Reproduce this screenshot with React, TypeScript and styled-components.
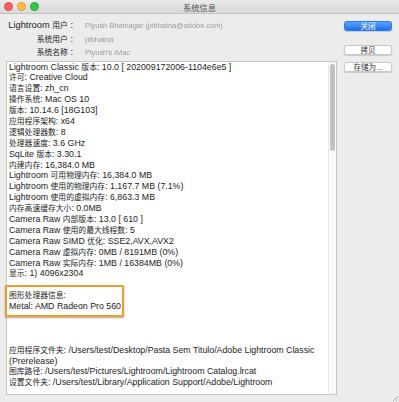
import styled, { createGlobalStyle } from "styled-components";

const GlobalStyle = createGlobalStyle`
	html, body {
		margin: 0;
		padding: 0;
		background: #ececec;
	}
	* {
		box-sizing: border-box;
	}
`;

const FONT = `"Liberation Sans", "Noto Sans CJK SC", sans-serif`;

const Window = styled.div`
	width: 399px;
	height: 402px;
	background: #ececec;
	font-family: ${FONT};
	display: flex;
	flex-direction: column;
	overflow: hidden;
	position: relative;
`;

const TitleBar = styled.div`
	height: 14px;
	flex: none;
	position: relative;
	display: flex;
	align-items: center;
	justify-content: center;
	background: linear-gradient(#ebebeb, #d9d9d9);
	border-bottom: 1px solid #c4c4c4;
	font-size: 8.3px;
	color: #555;
`;

const Lights = styled.div`
	position: absolute;
	left: 4px;
	top: 2px;
	display: flex;
	gap: 4px;
`;

const Light = styled.span<{ $color: string; $edge: string }>`
	width: 9px;
	height: 9px;
	border-radius: 50%;
	background: ${(p) => p.$color};
	border: 0.5px solid ${(p) => p.$edge};
`;

const Body = styled.div`
	flex: 1;
	display: flex;
	padding: 5px 7px 7px 6px;
	gap: 7px;
`;

const LeftCol = styled.div`
	width: 331px;
	display: flex;
	flex-direction: column;
`;

const InfoGrid = styled.div`
	display: grid;
	grid-template-columns: 67px auto;
	column-gap: 12px;
	font-size: 9.3px;
	line-height: 13.5px;
	color: #222;
`;

const Label = styled.span`
	text-align: right;
	white-space: nowrap;
`;

const Value = styled.span`
	color: #9a9a9a;
	font-size: 7.4px;
	filter: blur(0.6px);
	white-space: nowrap;
`;

const Han = styled.span`
	font-size: 7.8px;
`;

const TextBox = styled.div`
	margin-top: 1px;
	flex: 1;
	display: flex;
	background: #fff;
	border: 1px solid #c6c6c6;
	position: relative;
`;

const Lines = styled.div`
	flex: 1;
	padding: 0 0 0 2px;
	font-size: 8.8px;
	line-height: 10.9px;
	color: #222;
	white-space: nowrap;
	overflow: hidden;
	position: relative;
`;

const Line = styled.div`
	height: 10.9px;
`;

const Highlight = styled.div`
	position: absolute;
	left: -2px;
	top: 223px;
	width: 119px;
	height: 32px;
	border: 2px solid #f29d2b;
	border-radius: 1px;
	box-shadow: 0 1px 2px rgba(0, 0, 0, 0.35);
`;

const Track = styled.div`
	width: 8px;
	flex: none;
	background: #fafafa;
	border-left: 1px solid #e8e8e8;
	padding: 2px 0 0 1px;
`;

const Thumb = styled.div`
	width: 5px;
	height: 87px;
	border-radius: 3px;
	background: #c2c2c2;
`;

const RightCol = styled.div`
	width: 48px;
	display: flex;
	flex-direction: column;
	padding-top: 2px;
`;

const Button = styled.button<{ $primary?: boolean; $gap?: number }>`
	height: 10px;
	width: 48px;
	margin-top: ${(p) => p.$gap ?? 0}px;
	padding: 0;
	font-family: ${FONT};
	font-size: 7.6px;
	line-height: 9px;
	border-radius: 2.5px;
	color: ${(p) => (p.$primary ? "#fff" : "#333")};
	background: ${(p) =>
		p.$primary ? "linear-gradient(#5aa2fa, #1f6ff2)" : "#fff"};
	border: 0.5px solid ${(p) => (p.$primary ? "#2d75e8" : "#c8c8c8")};
	box-shadow: 0 0.5px 1px rgba(0, 0, 0, 0.15);
`;

const Grip = styled.svg`
	position: absolute;
	right: 1px;
	bottom: 1px;
`;

const lines = [
	"Lightroom Classic 版本: 10.0 [ 202009172006-1104e6e5 ]",
	"许可: Creative Cloud",
	"语言设置: zh_cn",
	"操作系统: Mac OS 10",
	"版本: 10.14.6 [18G103]",
	"应用程序架构: x64",
	"逻辑处理器数: 8",
	"处理器速度: 3.6 GHz",
	"SqLite 版本: 3.30.1",
	"内建内存: 16,384.0 MB",
	"Lightroom 可用物理内存: 16,384.0 MB",
	"Lightroom 使用的物理内存: 1,167.7 MB (7.1%)",
	"Lightroom 使用的虚拟内存: 6,863.3 MB",
	"内存高速缓存大小: 0.0MB",
	"Camera Raw 内部版本: 13.0 [ 610 ]",
	"Camera Raw 使用的最大线程数: 5",
	"Camera Raw SIMD 优化: SSE2,AVX,AVX2",
	"Camera Raw 虚拟内存: 0MB / 8191MB (0%)",
	"Camera Raw 实际内存: 1MB / 16384MB (0%)",
	"显示: 1) 4096x2304",
	"",
	"图形处理器信息:",
	"Metal: AMD Radeon Pro 560",
	"",
	"",
	"",
	"应用程序文件夹: /Users/test/Desktop/Pasta Sem Titulo/Adobe Lightroom Classic",
	"(Prerelease)",
	"图库路径: /Users/test/Pictures/Lightroom/Lightroom Catalog.lrcat",
	"设置文件夹: /Users/test/Library/Application Support/Adobe/Lightroom",
];

const mixed = (text: string) =>
	text
		.split(/([\u4e00-\u9fff]+)/)
		.filter(Boolean)
		.map((part, i) =>
			/[\u4e00-\u9fff]/.test(part) ? <Han key={i}>{part}</Han> : part
		);

const App = () => {
	return (
		<Window>
			<GlobalStyle />
			<TitleBar>
				<Lights>
					<Light $color="#fc605c" $edge="#de4a46" />
					<Light $color="#fdbc40" $edge="#dea035" />
					<Light $color="#34c84a" $edge="#27aa36" />
				</Lights>
				系统信息
			</TitleBar>
			<Body>
				<LeftCol>
					<InfoGrid>
						<Label>{mixed("Lightroom 用户 :")}</Label>
						<Value>Piyush Bhatnagar (pibhatna@adobe.com)</Value>
						<Label>{mixed("系统用户 :")}</Label>
						<Value>pibhatna</Value>
						<Label>{mixed("系统名称 :")}</Label>
						<Value>Piyush's iMac</Value>
					</InfoGrid>
					<TextBox>
						<Lines>
							{lines.map((l, i) => (
								<Line key={i}>{mixed(l)}</Line>
							))}
						</Lines>
						<Highlight />
						<Track>
							<Thumb />
						</Track>
					</TextBox>
				</LeftCol>
				<RightCol>
					<Button $primary>关闭</Button>
					<Button $gap={14}>拷贝</Button>
					<Button $gap={7}>存储为...</Button>
				</RightCol>
			</Body>
			<Grip width="6" height="6" viewBox="0 0 6 6">
				<path d="M1 6 L6 1 M3.5 6 L6 3.5" stroke="#888" strokeWidth="0.6" />
			</Grip>
		</Window>
	);
};

export default App;
